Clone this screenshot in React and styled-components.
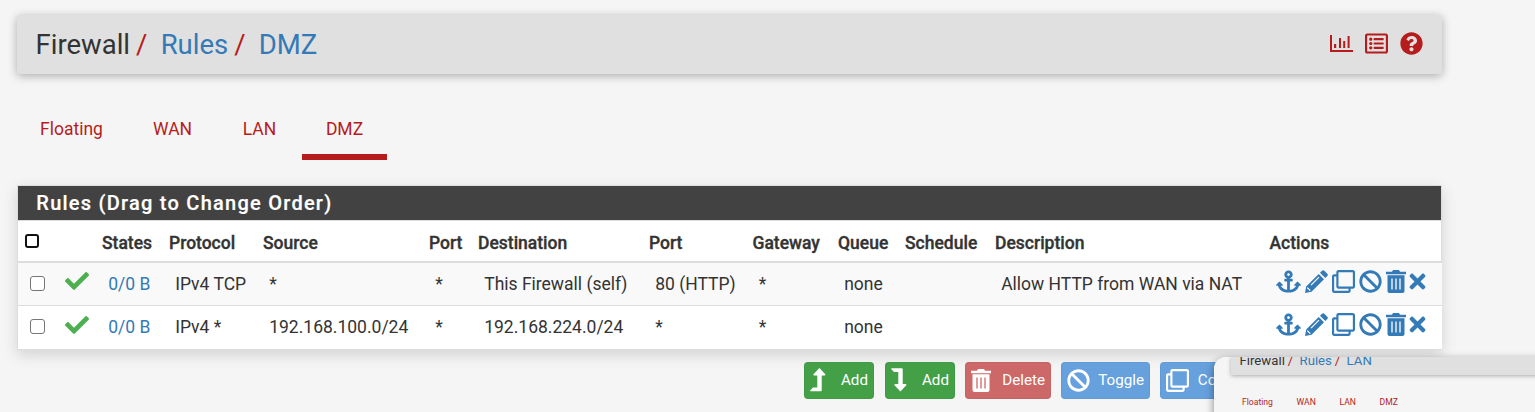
import React from 'react';
import styled, { createGlobalStyle } from 'styled-components';
import {
  FaCheck, FaAnchor, FaRegClone, FaBan, FaTimes, FaRegListAlt, FaQuestionCircle,
} from 'react-icons/fa';

const GlobalStyle = createGlobalStyle`
  * { box-sizing: border-box; }
  html, body { margin: 0; height: 100%; overflow: hidden; background: #f5f5f5; }
  body { font-family: Roboto, sans-serif; font-size: 17.5px; line-height: 25px; color: #333; }
  svg { display: block; flex: none; }
`;

const Page = styled.main`
  width: 1535px;
  height: 412px;
  overflow: hidden;
  position: relative;
  padding: 15px 93px 0 17px;
`;

const Breadcrumb = styled.header`
  display: flex;
  align-items: center;
  justify-content: space-between;
  height: 59px;
  padding: 0 19px 0 18.5px;
  background: #e0e0e0;
  border-radius: 3px;
  box-shadow: 0 2px 10px rgba(0, 0, 0, 0.3);
`;

const Crumbs = styled.div`
  display: flex;
  font-size: ${(p) => p.$size}px;
  line-height: 34px;
  white-space: nowrap;
`;

const Crumb = styled.span`
  color: ${(p) => (p.$link ? '#337ab7' : '#333')};
`;

const Slash = styled.span`
  color: #b71c1c;
  padding: 0 0.48em 0 0.22em;
`;

const HeaderIcons = styled.div`
  display: flex;
  align-items: center;
  gap: 12px;
  padding-bottom: 2px;
  color: #b71c1c;
`;

const Tabs = styled.nav`
  display: flex;
  height: 60px;
  margin-top: 26px;
`;

const Tab = styled.a`
  width: ${(p) => p.$w}px;
  padding-top: 17px;
  text-align: center;
  color: #b71c1c;
  border-bottom: 6px solid ${(p) => (p.$active ? '#b71c1c' : 'transparent')};

  &:last-child { margin-left: 2px; }
`;

const Panel = styled.section`
  width: 1425px;
  margin-top: 25px;
  background: #fff;
  border: 1px solid #ddd;
  box-shadow: 0 5px 14px rgba(0, 0, 0, 0.14);
`;

const PanelTitle = styled.h2`
  margin: 0;
  height: 34px;
  padding-left: 18.3px;
  background: #424242;
  color: #fff;
  font-size: 20px;
  font-weight: 500;
  line-height: 34px;
  letter-spacing: 1.25px;
  -webkit-text-stroke: 0.2px currentColor;
`;

const Table = styled.table`
  width: 1423px;
  table-layout: fixed;
  border-collapse: separate;
  border-spacing: 0;
`;

const Th = styled.th`
  height: 43px;
  padding: 4px 0 0;
  text-align: left;
  font-weight: 500;
  white-space: nowrap;
  -webkit-text-stroke: 0.35px currentColor;
  border-top: 1px solid #ddd;
  border-bottom: 2px solid #ddd;
`;

const Row = styled.tr`
  background: ${(p) => (p.$striped ? '#f9f9f9' : '#fff')};
`;

const Td = styled.td`
  height: 43px;
  padding: 0 0 0 6.2px;
  white-space: nowrap;
  color: ${(p) => (p.$link ? '#337ab7' : '#333')};
  border-bottom: ${(p) => (p.$last ? 0 : 1)}px solid #ddd;
`;

const Checkbox = styled.input`
  appearance: none;
  display: block;
  width: ${(p) => (p.$strong ? 14 : 15)}px;
  height: ${(p) => (p.$strong ? 14 : 15)}px;
  margin: ${(p) => (p.$strong ? '-5px 0 0 7px' : '0 0 2px 6px')};
  border: ${(p) => (p.$strong ? '2px solid #111' : '1px solid #767676')};
  border-radius: 3px;
  background: #fff;
`;

const Pass = styled.span`
  display: block;
  color: #4caf50;
  margin: -6px 0 0;
`;

const Actions = styled.div`
  display: flex;
  align-items: center;
  color: #337ab7;
  gap: 4px;
  margin-top: -6px;

  & > :last-child { margin-left: -4px; }
`;

const ButtonBar = styled.div`
  display: flex;
  gap: 10px;
  margin: 12px 0 0 787px;

  & > :first-child { margin-right: 1px; }
`;

const tones = { green: '#43a047', red: '#cd6868', blue: '#66a1de' };

const Button = styled.button`
  display: flex;
  align-items: center;
  justify-content: space-between;
  flex: none;
  width: ${(p) => p.$w}px;
  height: 37px;
  padding: 0 5px 1px;
  border: 1px solid rgba(0, 0, 0, 0.04);
  border-radius: 4px;
  background: ${(p) => tones[p.$tone]};
  color: #fff;
  font: 400 15.2px/20px Roboto, sans-serif;
`;

const Inset = styled.aside`
  position: absolute;
  left: 1214px;
  top: 357px;
  width: 340px;
  height: 80px;
  overflow: hidden;
  border-radius: 12px 0 0 0;
  background: #f5f5f5;
`;

const InsetShadow = styled(Inset)`
  overflow: visible;
  box-shadow: 0 3px 8px rgba(0, 0, 0, 0.45);
`;

const InsetHeader = styled.div`
  height: 18px;
  margin-left: 17px;
  padding-left: 8.5px;
  background: #e0e0e0;
  box-shadow: 0 1px 4px rgba(0, 0, 0, 0.3);
`;

const InsetCrumbs = styled(Crumbs)`
  line-height: 14px;
  transform: translateY(-3px);
`;

const InsetTabs = styled.div`
  display: flex;
  gap: 23.7px;
  margin: 21px 0 0 28px;
  color: #b71c1c;
  font-size: 8.6px;
  line-height: 12px;
`;

const ChartIcon = () => (
  <svg width="23" height="17" viewBox="0 0 23 17" fill="currentColor">
    <path d="M0 0h2v15h21v2H0zM4 9h2.2v4H4zM9 3h2v10H9zM13.2 6h2v7h-2zM17.6 1h2v12h-2z" />
  </svg>
);

const PencilIcon = () => (
  <svg width="23" height="23" viewBox="0 0 23 23">
    <path fill="currentColor" d="M15 2.7 17 .7q1.1-1.1 2.3 0l3 3q1.1 1.2 0 2.3l-2 2zM13.7 4l5.3 5.3L6.5 21.7 0 23l1.2-6.5z" />
    <path d="M14 7.2 6 15.2M2.3 17.6l3 3" stroke="#fff" strokeWidth="1.2" fill="none" />
  </svg>
);

const TrashIcon = ({ line = '#fff' }) => (
  <svg width="20" height="23" viewBox="0 0 20 23">
    <path fill="currentColor" d="M0 1.7h6L7 0h6l1 1.7h6v2.5H0zM1.5 5.3h17V21q0 2-2 2h-13q-2 0-2-2z" />
    <path d="M6 8.5v11M10 8.5v11M14 8.5v11" stroke={line} strokeWidth="1.3" />
  </svg>
);

const LevelArrow = ({ down }) => (
  <svg width="16" height="24" viewBox="0 0 16 24" fill="currentColor">
    <path
      transform={down ? 'matrix(1 0 0 -1 0 23.5)' : undefined}
      d="M9.4 0 15.3 6.2Q15.6 7.4 14.6 7.5H11.7V22.5Q11.7 23.3 10.9 23.3H.7Q-.3 23.2.4 22.3L3 19.5H7.3V7.5H4.2Q3 7.3 3.5 6.2z"
    />
  </svg>
);

const columns = [84, 67, 94, 166, 49, 171, 103.5, 85.5, 67, 90, 274.5, 172];
const headings = ['States', 'Protocol', 'Source', 'Port', 'Destination', 'Port', 'Gateway', 'Queue', 'Schedule', 'Description', 'Actions'];
const rules = [
  ['0/0 B', 'IPv4 TCP', '*', '*', 'This Firewall (self)', '80 (HTTP)', '*', 'none', '', 'Allow HTTP from WAN via NAT'],
  ['0/0 B', 'IPv4 *', '192.168.100.0/24', '*', '192.168.224.0/24', '*', '*', 'none', '', ''],
];

const LeadCell = styled.div`
  display: flex;
  align-items: center;
  gap: 20px;
`;

function Trail({ page }) {
  return (
    <>
      <Crumb>Firewall</Crumb>
      <Slash>/</Slash>
      <Crumb $link>Rules</Crumb>
      <Slash>/</Slash>
      <Crumb $link>{page}</Crumb>
    </>
  );
}

function RuleRow({ cells, index }) {
  const last = index === rules.length - 1;
  return (
    <Row $striped={index === 0}>
      <Td $last={last}>
        <LeadCell>
          <Checkbox type="checkbox" />
          <Pass><FaCheck size={24} /></Pass>
        </LeadCell>
      </Td>
      {cells.map((text, i) => <Td key={i} $link={i === 0} $last={last}>{text}</Td>)}
      <Td $last={last}>
        <Actions>
          <FaAnchor size={25} />
          <PencilIcon />
          <FaRegClone size={23} />
          <FaBan size={23} />
          <TrashIcon />
          <FaTimes size={23} />
        </Actions>
      </Td>
    </Row>
  );
}

export default function App() {
  return (
    <Page>
      <GlobalStyle />
      <Breadcrumb>
        <Crumbs $size={27.5}><Trail page="DMZ" /></Crumbs>
        <HeaderIcons>
          <ChartIcon />
          <FaRegListAlt size={23} />
          <FaQuestionCircle size={23} />
        </HeaderIcons>
      </Breadcrumb>
      <Tabs>
        <Tab $w={109}>Floating</Tab>
        <Tab $w={93}>WAN</Tab>
        <Tab $w={81}>LAN</Tab>
        <Tab $w={85} $active>DMZ</Tab>
      </Tabs>
      <Panel>
        <PanelTitle>Rules (Drag to Change Order)</PanelTitle>
        <Table>
          <colgroup>{columns.map((w, i) => <col key={i} width={w} />)}</colgroup>
          <thead>
            <tr>
              <Th><Checkbox $strong type="checkbox" /></Th>
              {headings.map((h, i) => <Th key={i}>{h}</Th>)}
            </tr>
          </thead>
          <tbody>{rules.map((cells, i) => <RuleRow key={i} cells={cells} index={i} />)}</tbody>
        </Table>
      </Panel>
      <ButtonBar>
        <Button $w={70} $tone="green"><LevelArrow />Add</Button>
        <Button $w={70} $tone="green"><LevelArrow down />Add</Button>
        <Button $w={86} $tone="red"><TrashIcon line="#cd6868" />Delete</Button>
        <Button $w={89} $tone="blue"><FaBan size={23} />Toggle</Button>
        <Button $w={78} $tone="blue"><FaRegClone size={23} />Copy</Button>
      </ButtonBar>
      <InsetShadow />
      <Inset>
        <InsetHeader>
          <InsetCrumbs $size={13.2}><Trail page="LAN" /></InsetCrumbs>
        </InsetHeader>
        <InsetTabs><span>Floating</span><span>WAN</span><span>LAN</span><span>DMZ</span></InsetTabs>
      </Inset>
    </Page>
  );
}
